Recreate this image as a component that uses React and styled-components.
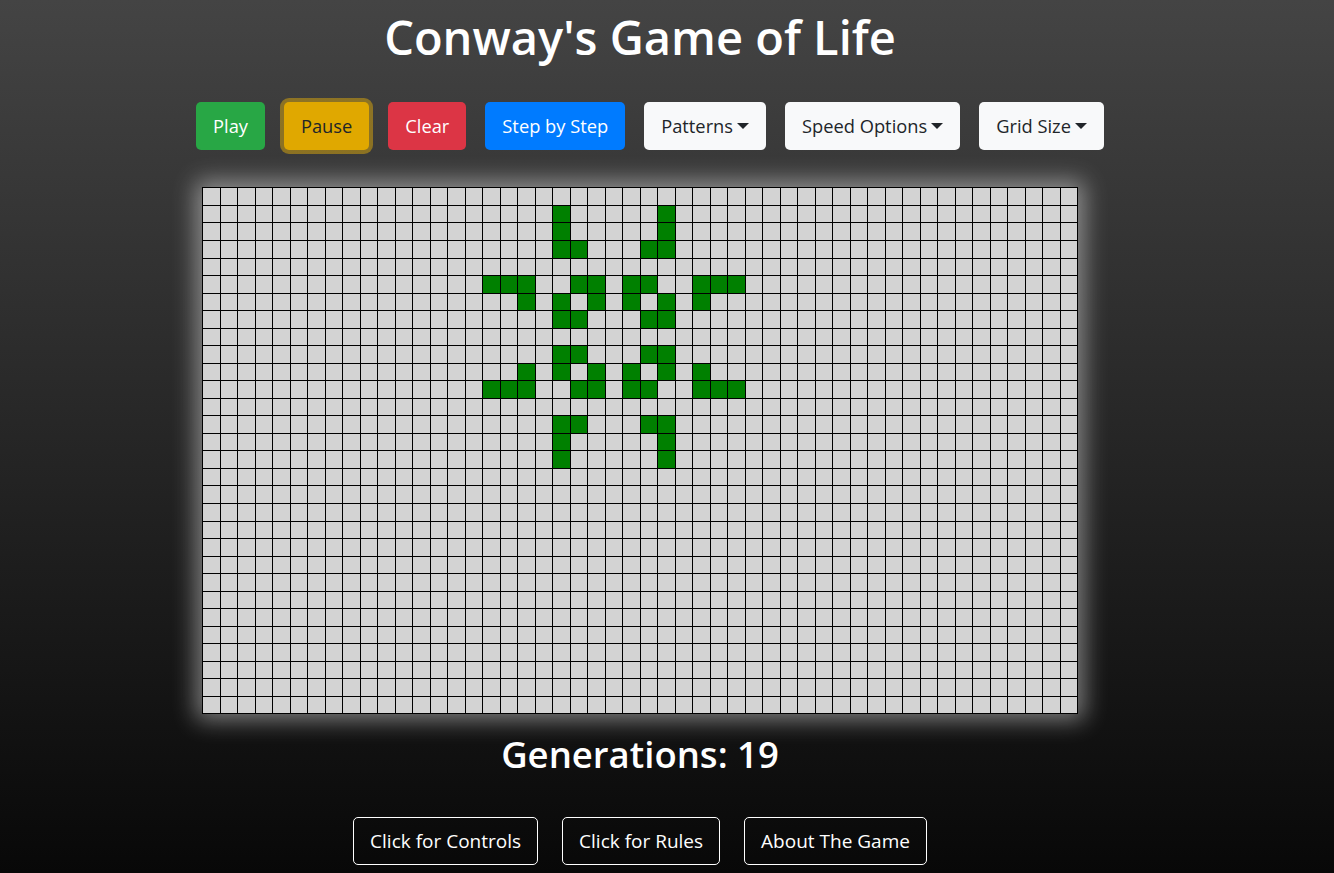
import styled, { createGlobalStyle } from 'styled-components'

const GlobalStyle = createGlobalStyle`
  html, body {
    margin: 0;
    padding: 0;
  }
  body {
    min-height: 100vh;
    background: linear-gradient(to bottom, #444444, #080808);
    font-family: 'Open Sans', 'Noto Sans', sans-serif;
    color: #FFFFFF;
  }
`

const ROWS = 30
const COLS = 50

const ALIVE = [
  [1, 20], [1, 26],
  [2, 20], [2, 26],
  [3, 20], [3, 21], [3, 25], [3, 26],
  [5, 16], [5, 17], [5, 18], [5, 21], [5, 22], [5, 24], [5, 25], [5, 28], [5, 29], [5, 30],
  [6, 18], [6, 20], [6, 22], [6, 24], [6, 26], [6, 28],
  [7, 20], [7, 21], [7, 25], [7, 26],
  [9, 20], [9, 21], [9, 25], [9, 26],
  [10, 18], [10, 20], [10, 22], [10, 24], [10, 26], [10, 28],
  [11, 16], [11, 17], [11, 18], [11, 21], [11, 22], [11, 24], [11, 25], [11, 28], [11, 29], [11, 30],
  [13, 20], [13, 21], [13, 25], [13, 26],
  [14, 20], [14, 26],
  [15, 20], [15, 26]
]

const aliveSet = new Set(ALIVE.map(([r, c]) => `${r}-${c}`))

const variants = {
  success: { bg: '#28a745', color: '#FFFFFF' },
  warning: { bg: '#e0a800', color: '#212529', ring: 'rgba(222, 170, 12, 0.5)' },
  danger: { bg: '#dc3545', color: '#FFFFFF' },
  primary: { bg: '#007bff', color: '#FFFFFF' },
  light: { bg: '#f8f9fa', color: '#212529' }
}

export default function App() {
  const cells = []
  for (let r = 0; r < ROWS; r++) {
    for (let c = 0; c < COLS; c++) {
      cells.push(<Cell key={`${r}-${c}`} $alive={aliveSet.has(`${r}-${c}`)} />)
    }
  }

  return (
    <>
      <GlobalStyle />
      <Page>
        <Title>Conway's Game of Life</Title>
        <Controls>
          <Button $variant='success'>Play</Button>
          <Button $variant='warning'>Pause</Button>
          <Button $variant='danger'>Clear</Button>
          <Button $variant='primary'>Step by Step</Button>
          <Dropdown $variant='light'>Patterns</Dropdown>
          <Dropdown $variant='light'>Speed Options</Dropdown>
          <Dropdown $variant='light'>Grid Size</Dropdown>
        </Controls>
        <Board>
          {cells}
        </Board>
        <Generations>Generations: 19</Generations>
        <InfoRow>
          <OutlineButton>Click for Controls</OutlineButton>
          <OutlineButton>Click for Rules</OutlineButton>
          <OutlineButton>About The Game</OutlineButton>
        </InfoRow>
      </Page>
    </>
  )
}

const Page = styled.div`
  width: 1280px;
  display: flex;
  flex-direction: column;
  align-items: center;
`

const Title = styled.h1`
  font-size: 47px;
  font-weight: 600;
  line-height: 1.2;
  margin: 9px 0 0;
`

const Controls = styled.div`
  display: flex;
  column-gap: 19px;
  margin: 37px 0 0 20px;
`

const Button = styled.button`
  font-family: inherit;
  font-size: 18.3px;
  line-height: 30px;
  padding: 8px 16px;
  border: 1px solid transparent;
  border-radius: 5px;
  background-color: ${({ $variant }) => variants[$variant].bg};
  color: ${({ $variant }) => variants[$variant].color};
  box-shadow: ${({ $variant }) => variants[$variant].ring ? `0 0 0 4px ${variants[$variant].ring}` : 'none'};
  cursor: pointer;
`

const Dropdown = styled(Button)`
  display: flex;
  align-items: center;

  &::after {
    content: '';
    margin-left: 4px;
    margin-top: -1px;
    border-top: 6px solid #212529;
    border-left: 6px solid transparent;
    border-right: 6px solid transparent;
  }
`

const Board = styled.div`
  display: grid;
  grid-template-columns: repeat(${COLS}, 1fr);
  grid-template-rows: repeat(${ROWS}, 1fr);
  gap: 1px;
  padding: 1px;
  width: 876px;
  height: 527px;
  box-sizing: border-box;
  background-color: #000000;
  margin-top: 37px;
  box-shadow: 0 0 22px 6px rgba(255, 255, 255, 0.45);
`

const Cell = styled.div`
  background-color: ${({ $alive }) => $alive ? '#008000' : '#d3d3d3'};
`

const Generations = styled.h2`
  font-size: 36.5px;
  font-weight: 600;
  line-height: 1.2;
  margin: 19px 0 0;
`

const InfoRow = styled.div`
  display: flex;
  column-gap: 24px;
  margin-top: 40px;
`

const OutlineButton = styled.button`
  font-family: inherit;
  font-size: 19px;
  line-height: 30px;
  padding: 8px 16px;
  border: 1px solid #FFFFFF;
  border-radius: 5px;
  background: transparent;
  color: #FFFFFF;
  cursor: pointer;
`
